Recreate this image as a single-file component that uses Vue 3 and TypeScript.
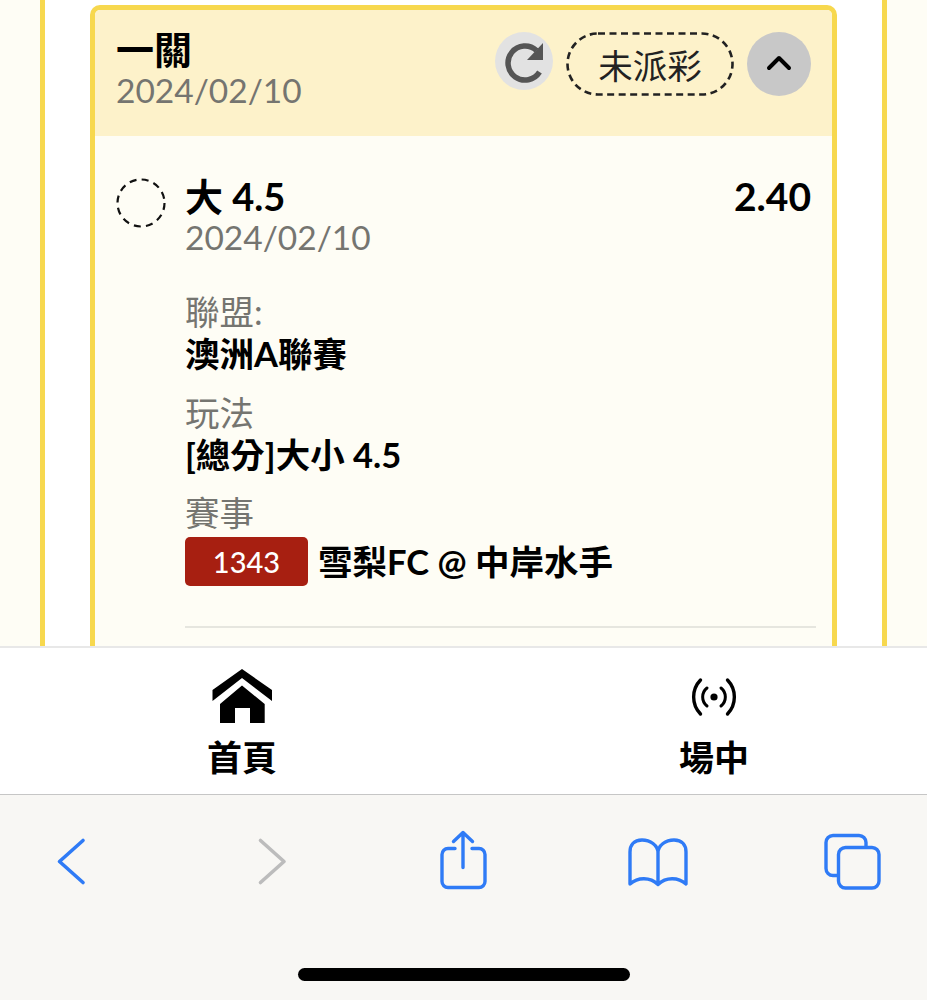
<script setup lang="ts">
type Detail = { label: string; value: string }

const details: Detail[] = [
  { label: '聯盟:', value: '澳洲A聯賽' },
  { label: '玩法', value: '[總分]大小 4.5' },
]
</script>

<template>
  <div class="screen">
    <main class="page">
      <div class="panel">
        <section class="card">
          <header class="card-head">
            <div class="head-text">
              <div class="head-title">一關</div>
              <div class="date">2024/02/10</div>
            </div>
            <div class="head-actions">
              <span class="refresh">
                <svg width="58" height="58" viewBox="495 32 58 58">
                  <path d="M536.500 50.500A17 17 0 1 0 539.500 72" fill="none" stroke="#555" stroke-width="5.500" />
                  <path d="M543 43V60H527Z" fill="#555" />
                </svg>
              </span>
              <span class="status">
                <svg class="status-line" width="168" height="64" viewBox="0 0 168 64">
                  <rect x="1.500" y="1.500" width="165" height="61" rx="30.500" fill="none" stroke="#222" stroke-width="2.600" stroke-dasharray="7 4.500" />
                </svg>
                未派彩
              </span>
              <span class="collapse">
                <svg width="64" height="64" viewBox="747 32 64 64">
                  <path d="M769 68L779 58L789 68" fill="none" stroke="#000" stroke-width="4" stroke-linecap="round" stroke-linejoin="round" />
                </svg>
              </span>
            </div>
          </header>
          <div class="card-body">
            <div class="bet">
              <svg class="bet-mark" width="50" height="50" viewBox="0 0 50 50">
                <circle cx="25" cy="25" r="23.500" fill="none" stroke="#111" stroke-width="2.200" stroke-dasharray="7 5.300" />
              </svg>
              <div class="bet-main">
                <div class="bet-row">
                  <span class="bet-name">大 4.5</span>
                  <span class="bet-odds">2.40</span>
                </div>
                <div class="date">2024/02/10</div>
                <div v-for="d in details" :key="d.label" class="detail">
                  <div class="detail-label">{{ d.label }}</div>
                  <div class="detail-value">{{ d.value }}</div>
                </div>
                <div class="detail detail-match">
                  <div class="detail-label">賽事</div>
                  <div class="match">
                    <span class="match-no">1343</span>
                    <span class="detail-value">雪梨FC @ 中岸水手</span>
                  </div>
                </div>
                <div class="divider"></div>
              </div>
            </div>
          </div>
        </section>
      </div>
    </main>

    <nav class="tabbar">
      <a class="tab">
        <svg width="60" height="56" viewBox="212 668 60 56">
          <path d="M242 669L272 690V701L242 678L212.500 701V690Z" fill="#000" />
          <path d="M242 685.500L264.700 704V723H250V708H235V723H220V704Z" fill="#000" />
        </svg>
        <span class="tab-text">首頁</span>
      </a>
      <a class="tab">
        <svg width="60" height="56" viewBox="684.500 668 60 56" fill="none" stroke="#000" stroke-linecap="round">
          <path d="M701 680A24.500 24.500 0 0 0 701 714M728 680A24.500 24.500 0 0 1 728 714" stroke-width="3.400" />
          <path d="M707.500 688A11.500 11.500 0 0 0 707.500 706M721.500 688A11.500 11.500 0 0 1 721.500 706" stroke-width="3" />
          <circle cx="714.500" cy="697" r="3.600" fill="#000" stroke="none" />
        </svg>
        <span class="tab-text">場中</span>
      </a>
    </nav>

    <footer class="safari">
      <div class="tools">
        <svg class="tool-icon" width="32" height="60" viewBox="55 830 32 60" fill="none">
          <path d="M83 840.500L59.500 861.500L83 882.500" stroke="#2f7bf6" stroke-width="3.600" stroke-linecap="round" stroke-linejoin="round" />
        </svg>
        <svg class="tool-icon" width="32" height="60" viewBox="256 830 32 60" fill="none">
          <path d="M260.500 840.500L284 861.500L260.500 882.500" stroke="#bcbcbc" stroke-width="3.600" stroke-linecap="round" stroke-linejoin="round" />
        </svg>
        <svg class="tool-icon" width="50" height="60" viewBox="439 830 50 60" fill="none" stroke="#2f7bf6" stroke-width="3.400" stroke-linecap="round" stroke-linejoin="round">
          <path d="M455 848.500H448A6 6 0 0 0 442 854.500V881.500A6 6 0 0 0 448 887.500H479A6 6 0 0 0 485 881.500V854.500A6 6 0 0 0 479 848.500H472" />
          <path d="M463 867.500V832.500M453.500 841.500L463 832.500L472.500 841.500" />
        </svg>
        <svg class="tool-icon" width="62" height="60" viewBox="627 830 62 60" fill="none" stroke="#2f7bf6" stroke-width="3.400" stroke-linecap="round" stroke-linejoin="round">
          <path d="M658 884.500V853C658 845 650 840 642 840C634 840 630 845 630 852V884C638 877 650 877 658 884.500C666 877 678 877 686 884V852C686 845 682 840 674 840C666 840 658 845 658 853" />
        </svg>
        <svg class="tool-icon" width="60" height="60" viewBox="823 830 60 60" fill="none" stroke="#2f7bf6" stroke-width="3.400" stroke-linejoin="round">
          <path d="M838 875.500H833A7 7 0 0 1 826 868.500V842.500A7 7 0 0 1 833 835.500H859A7 7 0 0 1 866 842.500V847.500" />
          <rect x="838.500" y="847.500" width="40.500" height="40.500" rx="7" />
        </svg>
      </div>
      <div class="home-bar"></div>
    </footer>
  </div>
</template>

<style>
html,
body {
  margin: 0;
  background: #fefdf5;
}
</style>

<style scoped>
.screen {
  display: flex;
  flex-direction: column;
  width: 927px;
  height: 1000px;
  overflow: hidden;
  font-family: Lato, "Noto Sans CJK TC", sans-serif;
  color: #000;
}
.page {
  flex: 1;
  min-height: 0;
  overflow: hidden;
  padding: 0 40px;
  background: #fefdf5;
}
.panel {
  height: 100%;
  padding: 5px 45px 0;
  box-sizing: border-box;
  border-left: 5px solid #f7d84e;
  border-right: 5px solid #f7d84e;
  background: #fff;
}
.card {
  box-sizing: border-box;
  height: 700px;
  border: 5px solid #f7d84e;
  border-radius: 10px;
  overflow: hidden;
  background: #fefdf5;
}
.card-head {
  display: flex;
  justify-content: space-between;
  height: 126px;
  padding: 18px 21px 0 21px;
  box-sizing: border-box;
  background: #fdf2ca;
}
.head-title {
  font-size: 38px;
  font-weight: 700;
  line-height: 42px;
}
.date {
  font-size: 33.500px;
  line-height: 40px;
  color: #757570;
}
.head-actions {
  display: flex;
  align-items: flex-start;
  padding-top: 4px;
}
.refresh {
  width: 58px;
  height: 58px;
  border-radius: 50%;
  background: #e2e2e2;
}
.refresh svg,
.collapse svg {
  display: block;
}
.status {
  position: relative;
  display: flex;
  align-items: center;
  justify-content: center;
  width: 168px;
  height: 64px;
  margin: 0 13px;
  font-size: 34.500px;
  color: #222;
}
.status-line {
  position: absolute;
  top: 0;
  left: 0;
}
.collapse {
  width: 64px;
  height: 64px;
  border-radius: 50%;
  background: #c8c8c8;
}
.card-body {
  padding: 40px 16px 0 21px;
}
.bet {
  display: flex;
}
.bet-mark {
  flex: none;
  margin-top: 2px;
}
.bet-main {
  flex: 1;
  margin-left: 19px;
}
.bet-row {
  display: flex;
  justify-content: space-between;
  margin-bottom: 1px;
  padding-right: 5px;
  font-size: 38px;
  font-weight: 700;
  line-height: 40px;
}
.bet-odds {
  font-size: 39px;
}
.detail {
  margin-top: 17px;
}
.bet-row + .date + .detail {
  margin-top: 34px;
}
.detail-match {
  margin-top: 16px;
}
.detail-label {
  font-size: 34.500px;
  line-height: 42px;
  color: #757570;
}
.detail-value {
  font-size: 34.500px;
  font-weight: 700;
  line-height: 42px;
}
.match {
  display: flex;
  align-items: center;
  gap: 10px;
  margin-top: 3px;
}
.match-no {
  width: 123px;
  height: 49px;
  border-radius: 5px;
  background: #a71f11;
  color: #fff;
  font-size: 29px;
  font-weight: 500;
  line-height: 49px;
  text-align: center;
}
.divider {
  height: 2px;
  margin-top: 40px;
  background: #e6e6df;
}
.tabbar {
  display: flex;
  justify-content: space-between;
  box-sizing: border-box;
  height: 149px;
  padding: 20px 163px 0 192px;
  border-top: 2px solid #e8e8e8;
  border-bottom: 1px solid #c6c6c6;
  background: #fff;
}
.tab {
  display: flex;
  flex-direction: column;
  align-items: center;
  width: 100px;
}
.tab-text {
  margin-top: 12px;
  font-size: 35px;
  font-weight: 700;
  line-height: 42px;
}
.safari {
  display: flex;
  flex-direction: column;
  align-items: center;
  height: 205px;
  box-sizing: border-box;
  padding-top: 35px;
  background: #f8f7f4;
}
.tools {
  display: grid;
  grid-template-columns: 201px 183px 188px 196px 60px;
  width: 100%;
  padding-left: 55px;
  box-sizing: border-box;
}
.tool-icon {
  display: block;
}
.home-bar {
  width: 332px;
  height: 13px;
  margin-top: 78px;
  border-radius: 7px;
  background: #000;
}
</style>
